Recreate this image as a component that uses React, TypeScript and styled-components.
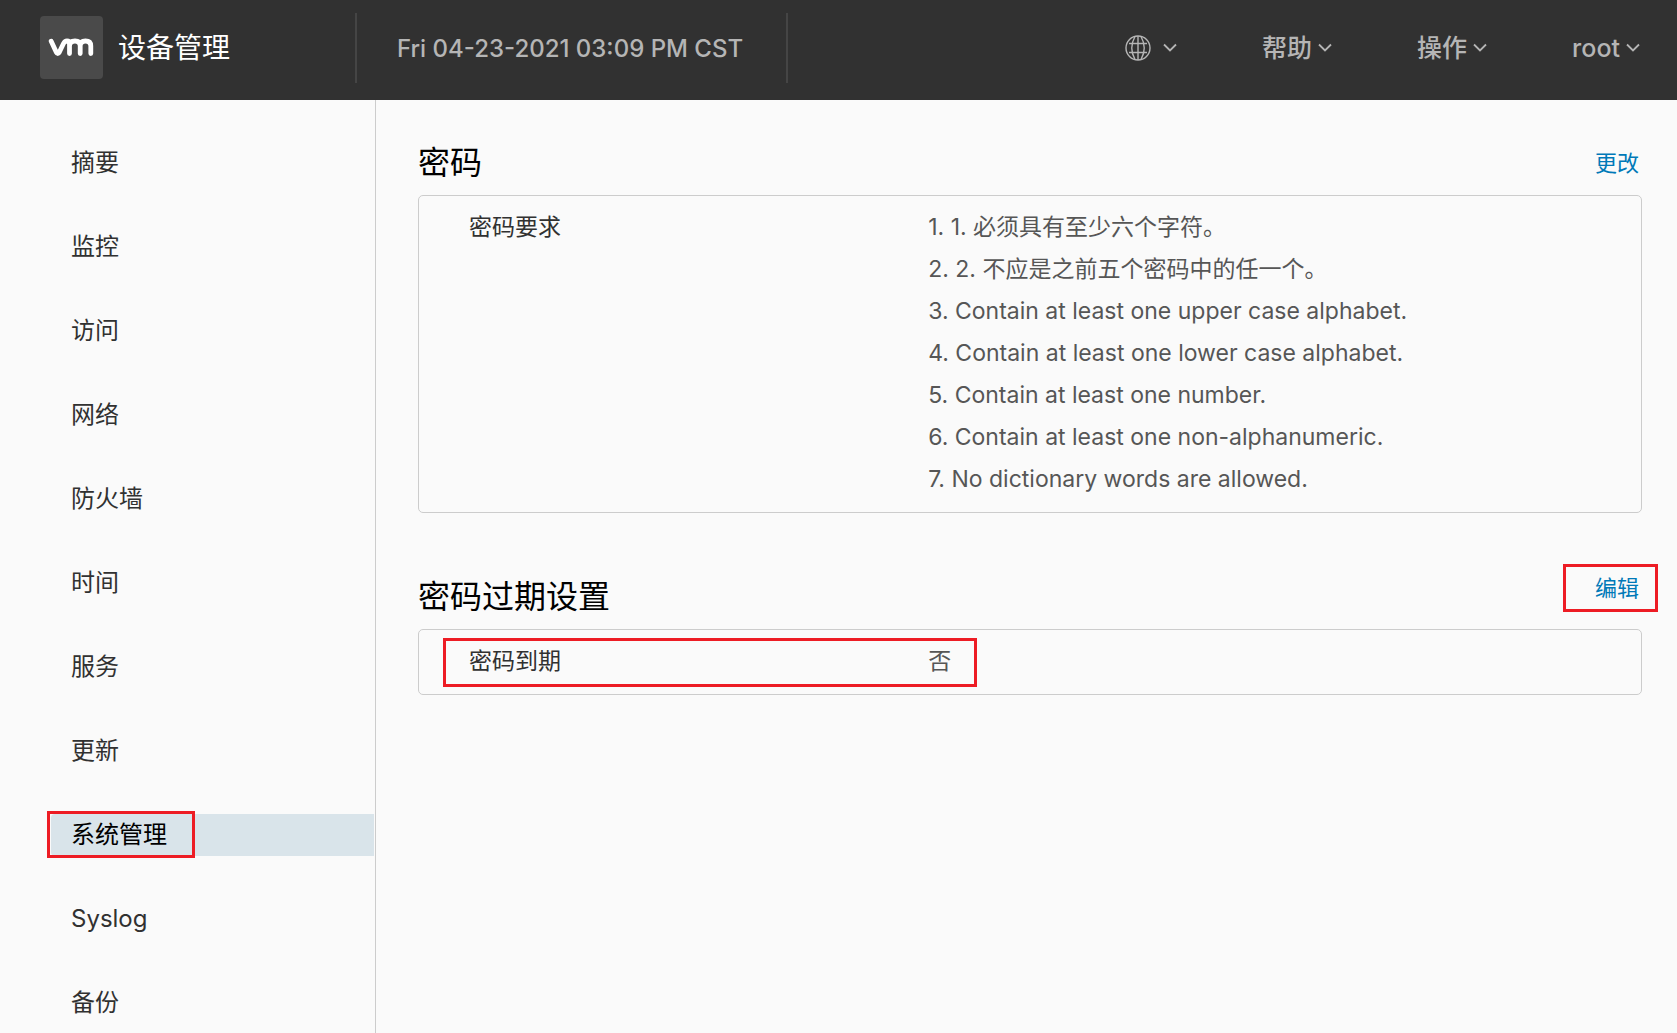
import React from 'react';
import styled, { createGlobalStyle } from 'styled-components';

const GlobalStyle = createGlobalStyle`
  *, *::before, *::after { box-sizing: border-box; }
  body {
    margin: 0;
    background: #fafafa;
    color: #313131;
    font-family: Inter, "Noto Sans CJK SC", sans-serif;
  }
`;

const Page = styled.div`
  min-height: 100vh;
  display: flex;
  flex-direction: column;
`;

const Header = styled.header`
  height: 100px;
  padding: 0 37px 0 40px;
  display: flex;
  align-items: flex-start;
  background: #313131;
  color: #b5b5b5;
`;

const Brand = styled.div`
  width: 315px;
  height: 95px;
  display: flex;
  align-items: center;
  gap: 15px;
`;

const LogoTile = styled.svg`
  width: 63px;
  height: 63px;
  border-radius: 4px;
  background: #4a4a4a;
`;

const BrandName = styled.span`
  color: #ffffff;
  font-size: 28px;
  line-height: 40px;
`;

const Clock = styled.time`
  height: 70px;
  margin-top: 13px;
  padding: 0 43px 0 40px;
  display: flex;
  align-items: center;
  border: solid #454545;
  border-width: 0 2px;
  font-size: 24px;
  font-weight: 500;
  white-space: nowrap;
`;

const Menus = styled.nav`
  height: 95px;
  margin-left: auto;
  display: flex;
  align-items: center;
  gap: 85px;
`;

const MenuButton = styled.button<{ $gap?: number }>`
  padding: 0;
  border: 0;
  display: flex;
  align-items: center;
  gap: ${(p) => p.$gap ?? 6}px;
  background: none;
  color: inherit;
  font: inherit;
  font-size: 25px;
  font-weight: 500;
  line-height: 40px;
  cursor: pointer;
`;

const Icon = styled.svg`
  display: block;
  fill: none;
  stroke: currentColor;
`;

const Body = styled.div`
  flex: 1;
  display: flex;
`;

const Sidebar = styled.nav`
  flex: none;
  width: 376px;
  padding: 42px 1px 9px 51px;
  border-right: 1px solid #cccccc;
`;

const NavList = styled.ul`
  margin: 0;
  padding: 0;
  display: flex;
  flex-direction: column;
  gap: 42px;
  list-style: none;
`;

const NavItem = styled.li`
  position: relative;
`;

const NavLink = styled.a<{ $active: boolean }>`
  display: block;
  height: 42px;
  padding-left: 20px;
  border-radius: 4px 0 0 4px;
  background: ${(p) => (p.$active ? '#d9e4ea' : 'transparent')};
  color: ${(p) => (p.$active ? '#000000' : '#313131')};
  font-size: 24px;
  line-height: 42px;
  text-decoration: none;
`;

const Main = styled.main`
  flex: 1;
  min-width: 0;
  padding: 42px 35px 42px 42px;
  display: flex;
  flex-direction: column;
  gap: 54px;
`;

const SectionHead = styled.div<{ $tall?: boolean }>`
  height: ${(p) => (p.$tall ? 62 : 53)}px;
  padding: 0 3px 11px 0;
  display: flex;
  justify-content: space-between;
  align-items: flex-start;
`;

const SectionTitle = styled.h2`
  margin: 0;
  align-self: flex-end;
  color: #000000;
  font-size: 32px;
  font-weight: 400;
  line-height: 42px;
`;

const ActionLink = styled.a`
  position: relative;
  color: #0079b8;
  font-size: 22px;
  line-height: 42px;
  text-decoration: none;
`;

const Card = styled.dl`
  margin: 0;
  padding: 10px 24px 12px 50px;
  border: 1px solid #cccccc;
  border-radius: 5px;
  font-size: 23px;
  line-height: 42px;
`;

const CardRow = styled.div`
  position: relative;
  display: grid;
  grid-template-columns: 2fr 3fr;
`;

const Term = styled.dt`
  color: #313131;
`;

const Value = styled.dd`
  margin: 0;
  color: #565656;
`;

const Rules = styled.ol`
  margin: 0;
  padding: 0;
  list-style: none;
`;

const Highlight = styled.span`
  position: absolute;
  border: 3px solid #ed1c24;
  pointer-events: none;
`;

const NavHighlight = styled(Highlight)`
  top: -3px;
  bottom: -2px;
  left: -4px;
  width: 148px;
`;

const RowHighlight = styled(Highlight)`
  top: -2px;
  bottom: -5px;
  left: -26px;
  width: calc(40% + 75px);
`;

const ActionHighlight = styled(Highlight)`
  top: -3px;
  bottom: -3px;
  left: -32px;
  right: -19px;
`;

const navItems = ['摘要', '监控', '访问', '网络', '防火墙', '时间', '服务', '更新', '系统管理', 'Syslog', '备份'];
const activeItem = '系统管理';

const rules = [
  '1. 必须具有至少六个字符。',
  '2. 不应是之前五个密码中的任一个。',
  'Contain at least one upper case alphabet.',
  'Contain at least one lower case alphabet.',
  'Contain at least one number.',
  'Contain at least one non-alphanumeric.',
  'No dictionary words are allowed.',
];

const Logo = () => (
  <LogoTile viewBox="0 0 63 63" role="img" aria-label="VMware">
    <path
      d="M11.2 25.2 L16.2 36 Q17.8 39 19.4 36 L23.5 27.500 Q24.800 25 27 25 Q29.500 25 29.500 28.500 V37.500 M29.500 30 Q29.500 25 35 25 Q40.200 25 40.200 30 V37.500 M40.200 30 Q40.200 25 45.500 25 Q50.800 25 50.800 30 V37.500"
      fill="none"
      stroke="#ffffff"
      strokeWidth="4.8"
      strokeLinecap="round"
      strokeLinejoin="round"
    />
  </LogoTile>
);

const Chevron = () => (
  <Icon width="14" height="14" viewBox="0 0 14 14" strokeWidth="1.8" aria-hidden="true">
    <path d="M1 3.500 L7 9.500 L13 3.500" />
  </Icon>
);

const Globe = () => (
  <Icon width="26" height="26" viewBox="0 0 26 26" strokeWidth="1.4" aria-hidden="true">
    <circle cx="13" cy="13" r="12" />
    <path d="M13 1 V25 M4 8.500 H22 M4 17.500 H22 M10 1.500 Q3.500 13 10 24.500 M16 1.500 Q22.500 13 16 24.500" />
  </Icon>
);

export default function App() {
  return (
    <Page>
      <GlobalStyle />
      <Header>
        <Brand>
          <Logo />
          <BrandName>设备管理</BrandName>
        </Brand>
        <Clock dateTime="2021-04-23T15:09">Fri 04-23-2021 03:09 PM CST</Clock>
        <Menus>
          <MenuButton type="button" $gap={12} aria-label="语言">
            <Globe />
            <Chevron />
          </MenuButton>
          {['帮助', '操作', 'root'].map((label) => (
            <MenuButton type="button" key={label}>
              {label}
              <Chevron />
            </MenuButton>
          ))}
        </Menus>
      </Header>
      <Body>
        <Sidebar>
          <NavList>
            {navItems.map((item) => (
              <NavItem key={item}>
                <NavLink href="#" $active={item === activeItem}>
                  {item}
                </NavLink>
                {item === activeItem && <NavHighlight />}
              </NavItem>
            ))}
          </NavList>
        </Sidebar>
        <Main>
          <section>
            <SectionHead>
              <SectionTitle>密码</SectionTitle>
              <ActionLink href="#">更改</ActionLink>
            </SectionHead>
            <Card>
              <CardRow>
                <Term>密码要求</Term>
                <Value>
                  <Rules>
                    {rules.map((rule, i) => (
                      <li key={rule}>{`${i + 1}. ${rule}`}</li>
                    ))}
                  </Rules>
                </Value>
              </CardRow>
            </Card>
          </section>
          <section>
            <SectionHead $tall>
              <SectionTitle>密码过期设置</SectionTitle>
              <ActionLink href="#">
                编辑
                <ActionHighlight />
              </ActionLink>
            </SectionHead>
            <Card>
              <CardRow>
                <Term>密码到期</Term>
                <Value>否</Value>
                <RowHighlight />
              </CardRow>
            </Card>
          </section>
        </Main>
      </Body>
    </Page>
  );
}
